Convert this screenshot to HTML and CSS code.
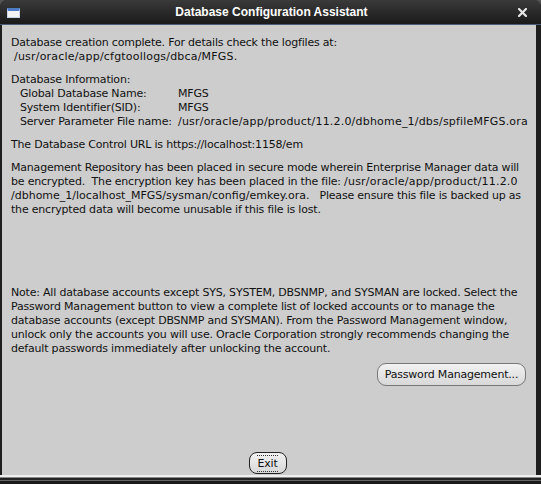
FILE: index.html
```html
<!DOCTYPE html>
<html>
<head>
<meta charset="utf-8">
<link rel="stylesheet" href="styles.css">
</head>
<body>
<div class="window">
  <div class="titlebar">
    <div class="app-icon"></div>
    <div class="title">Database Configuration Assistant</div>
    <svg class="close" width="9" height="9" viewBox="0 0 9 9"><path d="M1 1 L8 8 M8 1 L1 8" stroke="#e6e6e6" stroke-width="2.2" stroke-linecap="square"/></svg>
  </div>
  <div class="content">
    <div class="block">
      <div>Database creation complete. For details check the logfiles at:</div>
      <div class="ind1"><span class="p">/usr/oracle/app/cfgtoollogs/dbca/MFGS.</span></div>
    </div>
    <div class="block">
      <div>Database Information:</div>
      <div class="row"><span class="k">Global Database Name:</span><span>MFGS</span></div>
      <div class="row"><span class="k">System Identifier(SID):</span><span>MFGS</span></div>
      <div class="row"><span class="k">Server Parameter File name:</span><span class="p">/usr/oracle/app/product/11.2.0/dbhome_1/dbs/spfileMFGS.ora</span></div>
    </div>
    <div class="block">
      <div>The Database Control URL is https://localhost:1158/em</div>
    </div>
    <div class="block">
      <div>Management Repository has been placed in secure mode wherein Enterprise Manager data will</div>
      <div>be encrypted.&nbsp; The encryption key has been placed in the file: <span class="p">/usr/oracle/app/product/11.2.0</span></div>
      <div><span class="p2">/dbhome_1/localhost_MFGS/sysman/config/emkey.ora.</span>&nbsp;&nbsp; Please ensure this file is backed up as</div>
      <div>the encrypted data will become unusable if this file is lost.</div>
    </div>
    <div class="spacer"></div>
    <div class="note">
      <div>Note: All database accounts except SYS, SYSTEM, DBSNMP, and SYSMAN are locked. Select the</div>
      <div>Password Management button to view a complete list of locked accounts or to manage the</div>
      <div>database accounts (except DBSNMP and SYSMAN). From the Password Management window,</div>
      <div>unlock only the accounts you will use. Oracle Corporation strongly recommends changing the</div>
      <div>default passwords immediately after unlocking the account.</div>
    </div>
    <div class="pm-row"><button class="btn pm">Password Management...</button></div>
    <div class="exit-row"><button class="btn exit"><span class="focus">Exit</span></button></div>
  </div>
  <div class="bottom"></div>
</div>
</body>
</html>
```
FILE: styles.css
```css
html, body {
  margin: 0;
  padding: 0;
  background: #555;
}
.window {
  width: 541px;
  height: 484px;
  display: flex;
  flex-direction: column;
  box-sizing: border-box;
  background: #1e1e1e;
  border-radius: 7px 7px 0 0;
  overflow: hidden;
}
.titlebar {
  height: 24px;
  flex: none;
  display: flex;
  align-items: center;
  background: linear-gradient(#3a3a3a, #1a1a1a);
  border-bottom: 1px solid #4a5c78;
  position: relative;
  color: #fff;
}
.app-icon {
  position: absolute;
  left: 7px;
  top: 8px;
  width: 13px;
  height: 10px;
  box-sizing: border-box;
  background: #f4f4f4;
  border: 1px solid #c8d4e8;
  border-top: 3px solid #4d7cc7;
}
.title {
  flex: 1;
  text-align: center;
  font-family: "Liberation Sans", Arial, sans-serif;
  font-weight: bold;
  font-size: 12px;
  padding-left: 2px;
}
.close {
  position: absolute;
  right: 14px;
  top: 8px;
}
.content {
  flex: 1;
  display: flex;
  flex-direction: column;
  background: #cdcdcd;
  margin: 0 5px 0 2px;
  padding: 11px 0 0 9px;
  font-family: "DejaVu Sans", sans-serif;
  font-size: 11px;
  line-height: 14px;
  color: #111;
  letter-spacing: -0.2px;
}
.p {
  letter-spacing: 0.2px;
}
.p2 {
  letter-spacing: 0px;
}
.block {
  margin-bottom: 9px;
}
.ind1 {
  padding-left: 3px;
}
.row {
  display: flex;
  padding-left: 9px;
}
.row .k {
  width: 158px;
}
.spacer {
  height: 60px;
}
.pm-row {
  display: flex;
  justify-content: flex-end;
  padding-right: 10px;
  margin-top: 7px;
}
.btn {
  font-family: "DejaVu Sans", sans-serif;
  font-size: 11px;
  color: #111;
  background: linear-gradient(#f2f2f2, #d8d8d8);
  border: 1px solid #777;
  border-radius: 9px;
  padding: 0;
  letter-spacing: -0.2px;
  white-space: nowrap;
}
.pm {
  height: 23px;
  width: 149px;
}
.exit-row {
  margin-top: auto;
  display: flex;
  justify-content: center;
  padding-right: 12px;
  margin-bottom: 1px;
}
.exit {
  height: 22px;
  width: 38px;
  border: 1px solid #222;
  border-radius: 8px;
}
.exit .focus {
  border-top: 1px dotted #333;
  border-bottom: 1px dotted #333;
  padding: 1px 0;
}
.bottom {
  height: 9px;
  flex: none;
  background: linear-gradient(#eeeeee 0, #eeeeee 2px, #888 2px, #888 3px, #222 3px, #222 5px, #666 5px, #666 6px, #1a1a1a 6px);
}
```
